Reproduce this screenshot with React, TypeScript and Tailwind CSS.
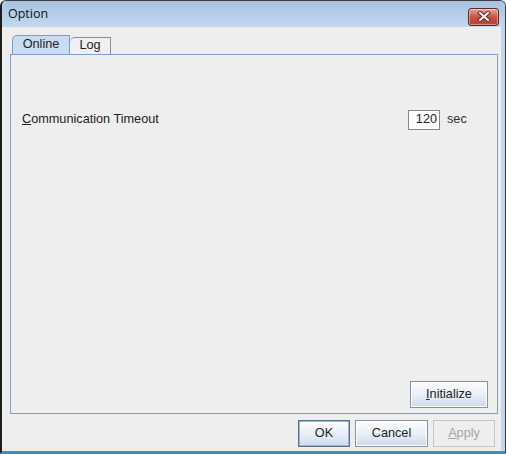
import React from "react";

const font = { fontFamily: '"Liberation Sans", Arial, sans-serif' };

const Button: React.FC<{
  width: string;
  focused?: boolean;
  disabled?: boolean;
  children: React.ReactNode;
}> = ({ width, focused, disabled, children }) => {
  if (disabled) {
    return (
      <div
        className={`${width} h-[27px] flex items-center justify-center border border-[#c4c4c4] bg-[#eeeeee] text-[12.7px] text-[#a6a6a6]`}
      >
        {children}
      </div>
    );
  }
  return (
    <div
      className={`${width} h-[27px] p-[1px] border ${
        focused ? "border-[#5a6e8c]" : "border-[#8a919c]"
      } bg-white`}
    >
      <div
        className={`w-full h-full flex items-center justify-center text-[12.7px] text-[#222] bg-gradient-to-b from-[#fbfcfe] via-[#e9f0f9] to-[#cfdcee] ${
          focused ? "outline outline-1 outline-[#9db4d8]" : ""
        }`}
      >
        {children}
      </div>
    </div>
  );
};

const App: React.FC = () => {
  return (
    <div className="w-[506px] h-[454px] bg-white" style={font}>
      <div className="w-full h-full flex flex-col rounded-t-[6px] border border-[#3c3c3c] border-l-2 border-l-[#1e1e1e] border-b-[3px] border-b-[#3592b8] bg-[#eeeeee] overflow-hidden">
        {/* title bar */}
        <div className="h-[26px] shrink-0 flex items-center justify-between pl-[6px] pr-[6px] bg-gradient-to-b from-[#a8c3e2] to-[#c3d8ef]">
          <span
            className="text-[12.5px] text-[#111]"
            style={{ fontFamily: '"Open Sans", "DejaVu Sans", sans-serif' }}
          >
            Option
          </span>
          <div className="w-[31px] h-[18px] mt-[5px] rounded-[3px] border border-[#5a2a2a] bg-gradient-to-b from-[#e6a397] via-[#c9533f] to-[#b8402f] flex items-center justify-center shadow-[inset_0_0_0_1px_rgba(255,255,255,0.4)]">
            <svg width="14" height="11" viewBox="0 0 14 11">
              <path
                d="M3 2 L11 9 M11 2 L3 9"
                stroke="#6a2a2a"
                strokeWidth="4"
                strokeLinecap="square"
              />
              <path
                d="M3 2 L11 9 M11 2 L3 9"
                stroke="#f4f4f4"
                strokeWidth="2"
                strokeLinecap="square"
              />
            </svg>
          </div>
        </div>

        {/* body */}
        <div className="flex-1 flex flex-col border-r-[4px] border-r-[#c3d6ec] pl-[8px] pr-[3px] pt-[8px] pb-[4px]">
          {/* tabs */}
          <div className="flex items-end h-[19px] pl-[2px]">
            <div className="w-[58px] h-[19px] flex items-center justify-center rounded-tl-[5px] border border-b-0 border-[#7e9bcf] bg-[#c8dcf2] text-[12.7px] text-[#222]">
              Online
            </div>
            <div className="w-[41px] h-[17px] flex items-center justify-center rounded-tl-[5px] border border-b-0 border-l-0 border-[#8a9097] bg-[#f0f0f0] text-[12.7px] text-[#222]">
              Log
            </div>
          </div>

          {/* panel */}
          <div className="h-[360px] flex flex-col border border-[#8d99ad] border-l-[#7f9dd6] border-t-[#7f9dd6] pl-[11px] pr-[9px] pb-[5px]">
            <div className="flex items-center h-[20px] mt-[55px]">
              <span className="flex-1 text-[12.7px] text-[#222]">
                <span className="underline">C</span>ommunication Timeout
              </span>
              <div className="w-[32px] h-[20px] border border-[#7a8a9c] bg-white flex items-center justify-end pr-[2px] text-[12.7px] text-[#222]">
                120
              </div>
              <span className="w-[48px] pl-[7px] text-[12.7px] text-[#333]">sec</span>
            </div>
            <div className="flex-1" />
            <div className="flex justify-end">
              <Button width="w-[78px]">
                <span className="underline">I</span>nitialize
              </Button>
            </div>
          </div>

          {/* bottom buttons */}
          <div className="flex justify-end gap-[5px] mt-[6px] pr-[3px]">
            <Button width="w-[52px]" focused>
              OK
            </Button>
            <Button width="w-[73px]">Cancel</Button>
            <Button width="w-[62px]" disabled>
              <span className="underline">A</span>pply
            </Button>
          </div>
        </div>
      </div>
    </div>
  );
};

export default App;
